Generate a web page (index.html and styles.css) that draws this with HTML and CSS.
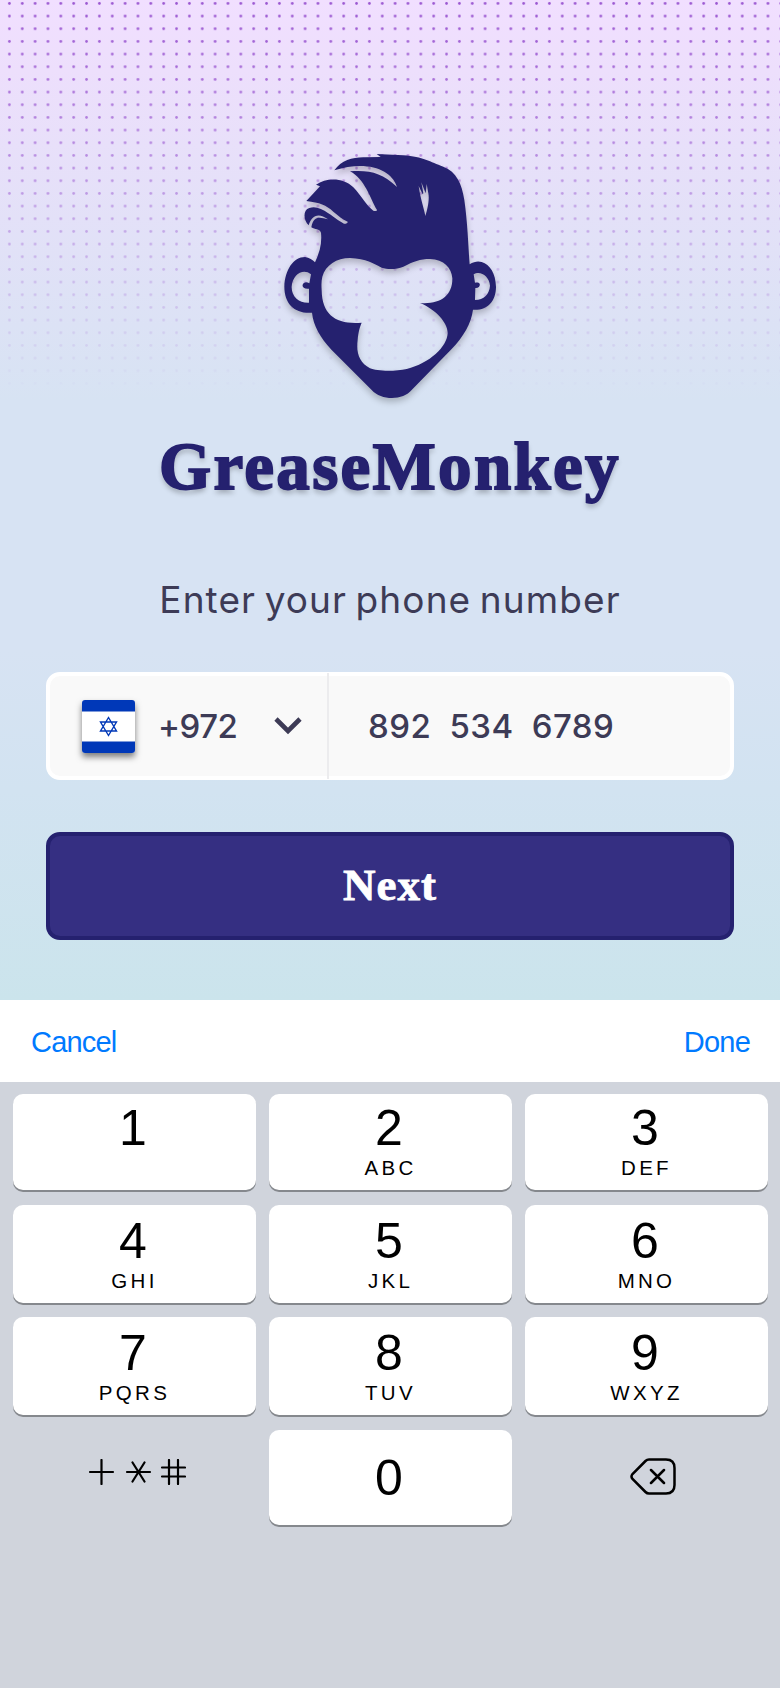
FILE: index.html
```html
<!DOCTYPE html>
<html lang="en">
<head>
<meta charset="utf-8">
<title>GreaseMonkey</title>
<link rel="stylesheet" href="styles.css">
</head>
<body>
<main class="login">
  <svg class="dots" width="780" height="410" viewBox="0 0 780 410" aria-hidden="true">
    <defs>
      <pattern id="dot" x="2.97" y="-2.9" width="12.857" height="12.667" patternUnits="userSpaceOnUse"><circle cx="6.43" cy="6.33" r="1.35" fill="#8f45cb"/></pattern>
      <linearGradient id="fade" x1="0" y1="0" x2="0" y2="1"><stop offset="0" stop-color="#fff" stop-opacity=".9"/><stop offset=".96" stop-color="#fff" stop-opacity="0"/></linearGradient>
      <mask id="fadeMask"><rect width="780" height="410" fill="url(#fade)"/></mask>
    </defs>
    <rect width="780" height="410" fill="url(#dot)" mask="url(#fadeMask)"/>
  </svg>
  <svg class="logo" viewBox="0 0 720 810" role="img" aria-label="GreaseMonkey logo">
    <path fill="#25216f" fill-rule="evenodd" d="M320 42L400 46C460 50 480 66 520 80C560 96 575 130 583 180C593 250 595 320 599 373C612 364 625 363 635 366C660 374 677 400 678 440C678 484 652 512 609 509C604 550 580 590 545 627L425 750C400 781 335 783 305 750L185 630C150 592 130 556 126 518C75 522 43 492 43 440C45 390 70 351 105 351C118 353 128 360 135 367C150 335 156 310 153 278C148 265 135 270 124 262C130 226 150 231 174 238C142 213 122 232 116 256C100 241 98 210 118 204C137 198 155 206 175 220C195 233 210 246 222 251C227 252 234 249 233 245C220 239 205 228 190 215C168 195 150 188 109 183L150 139L138 134C170 112 220 112 250 142C275 168 290 198 310 212C315 214 322 213 321 210C300 175 285 117 240 94C300 90 335 98 381 141C365 88 290 60 193 91C215 60 250 51 285 52L332 51Z
    M157 410C167 375 200 354 240 354C290 356 310 370 335 383C355 389 380 388 400 380C430 365 450 357 480 357C522 359 545 383 547 415C548 467 510 494 450 489C500 510 534 550 533 580C531 620 480 670 410 687C375 695 320 694 300 685C268 668 258 640 263 600C265 575 270 560 275 548C200 554 156 527 155 450C154 435 154 422 157 410Z
    M123 403C100 384 68 402 65 440C64 472 90 490 117 488L117 446C103 448 96 441 98 434C100 426 110 424 118 430Z
    M611 403C630 390 658 408 660 437C658 462 642 480 615 480L616 444C626 445 631 438 629 431C626 426 620 427 615 428Z
    M446 138L458 163L460 160L454 127L467 160L470 132L475 160C479 180 472 210 466 228C462 205 452 180 446 138Z"/>
  </svg>
  <h1 class="brand">GreaseMonkey</h1>
  <p class="prompt">Enter your phone number</p>
  <div class="phone">
    <div class="country">
      <svg class="flag" viewBox="0 0 53 53"><rect width="53" height="53" rx="3" fill="#fff"/><path d="M0 11.5V3Q0 0 3 0H50Q53 0 53 3V11.5ZM0 41.5V50Q0 53 3 53H50Q53 53 53 50V41.5Z" fill="#0038b8"/><path d="M26.5 17.5L34.5 31H18.5ZM26.5 35.5L18.5 22H34.5Z" fill="none" stroke="#0038b8" stroke-width="1.4"/></svg>
      <span class="code">+972</span>
      <svg class="chevron" viewBox="0 0 28 18"><path d="M2 2L14 14L26 2" fill="none" stroke="#3d3b56" stroke-width="4.6"/></svg>
    </div>
    <div class="number"><span>892</span><span>534</span><span>6789</span></div>
  </div>
  <button class="next">Next</button>
</main>
<section class="keyboard">
  <div class="toolbar"><span class="cancel">Cancel</span><span class="done">Done</span></div>
  <div class="keys">
    <div class="key top"><b>1</b></div><div class="key top"><b>2</b><i>ABC</i></div><div class="key top"><b>3</b><i>DEF</i></div>
    <div class="key"><b>4</b><i>GHI</i></div><div class="key"><b>5</b><i>JKL</i></div><div class="key"><b>6</b><i>MNO</i></div>
    <div class="key"><b>7</b><i>PQRS</i></div><div class="key"><b>8</b><i>TUV</i></div><div class="key"><b>9</b><i>WXYZ</i></div>
    <div class="plain"><svg class="symbols" viewBox="0 0 98 26"><path d="M2 13H25M13.500 1V25M39 13H62M44.500 3.500L56.500 22.500M56.500 3.500L44.500 22.500M74 8.500H97M74 17.500H97M81 1V25M90 1V25" fill="none" stroke="#000" stroke-width="2.2" stroke-linecap="round"/></svg></div>
    <div class="key zero"><b>0</b></div>
    <div class="plain"><svg class="erase" viewBox="0 0 46 37"><path d="M19 1.500H36Q44.500 1.500 44.500 10V27Q44.500 35.500 36 35.500H19Q17 35.500 15.500 34L2.500 21Q0.500 18.500 2.500 16L15.500 3Q17 1.500 19 1.500ZM21 12L34 25M34 12L21 25" fill="none" stroke="#000" stroke-width="2.500" stroke-linecap="round"/></svg></div>
  </div>
</section>
</body>
</html>
```
FILE: styles.css
```css
* { box-sizing: border-box; }
body { margin: 0; width: 780px; height: 1688px; overflow: hidden; background: #d0d4dc; font-family: "Liberation Sans", Arial, sans-serif; }
.login { position: relative; height: 1000px; padding: 140px 46px 0; display: flex; flex-direction: column; align-items: center; background: linear-gradient(#f1dfff 0, #eddffc 70px, #d7e3f3 400px, #d7e3f3 650px, #d2e3f1 790px, #cbe4ec 1000px); }
.dots { position: absolute; left: 0; top: 0; }
.logo { position: relative; width: 240px; height: 270px; flex: none; filter: drop-shadow(0 4px 3px rgba(0,0,0,.22)); }
.brand { margin: 14px 0 0; height: 84px; font: 700 67px/84px "Liberation Serif", serif; letter-spacing: 2.3px; white-space: nowrap; color: #25216f; -webkit-text-stroke: 1.8px #25216f; text-shadow: 0 4px 5px rgba(0,0,0,.25); }
.prompt { margin: 62px 0 0; height: 60px; font: 400 37px/60px Inter, sans-serif; letter-spacing: 1.1px; word-spacing: -3px; color: #3d3b56; white-space: nowrap; }
.phone { margin-top: 42px; width: 688px; height: 108px; flex: none; display: flex; background: #f9f9f9; border: 4px solid #fff; border-radius: 14px; font: 500 33px/100px Inter, sans-serif; color: #3d3b56; }
.country { width: 279px; padding-left: 32px; display: flex; align-items: center; margin: -3px 0; border-right: 2px solid #ececee; }
.flag { width: 53px; height: 53px; filter: drop-shadow(0 4px 3px rgba(0,0,0,.5)); }
.code { width: 116px; margin-left: 23px; letter-spacing: -.5px; }
.chevron { width: 28px; height: 18px; }
.number { display: flex; gap: 18px; padding-left: 39px; letter-spacing: .5px; }
.next { margin-top: 52px; width: 688px; height: 108px; flex: none; padding: 0 0 2px; border: 4px solid #25216f; border-radius: 14px; background: #352f82; color: #fff; font: 700 45px/98px "Liberation Serif", serif; letter-spacing: 1px; -webkit-text-stroke: .8px #fff; }
.toolbar { height: 82px; padding: 2px 30px 0 31px; display: flex; justify-content: space-between; align-items: center; background: #fff; color: #007aff; font-size: 29px; letter-spacing: -.8px; }
.keys { padding: 12px 13px; display: grid; grid-template-columns: repeat(3, 243px); grid-template-rows: 96px 98px 98px 95px; column-gap: 13px; row-gap: 14.6px; }
.key { padding-top: 8px; border-radius: 10px; background: #fff; box-shadow: 0 2px 0 #85888d; display: flex; flex-direction: column; align-items: center; color: #000; }
.key b { font-weight: 400; font-size: 50px; line-height: 56px; padding-right: 3px; }
.key i { font-style: normal; font-size: 20.5px; line-height: 24px; letter-spacing: 3.3px; }
.key.top { padding-top: 6px; }
.key.zero { padding-top: 20px; }
.plain { display: flex; }
.symbols { width: 98px; height: 26px; margin: 29px 0 0 75px; }
.erase { width: 46px; height: 37px; margin: 28px 0 0 105px; }
```
